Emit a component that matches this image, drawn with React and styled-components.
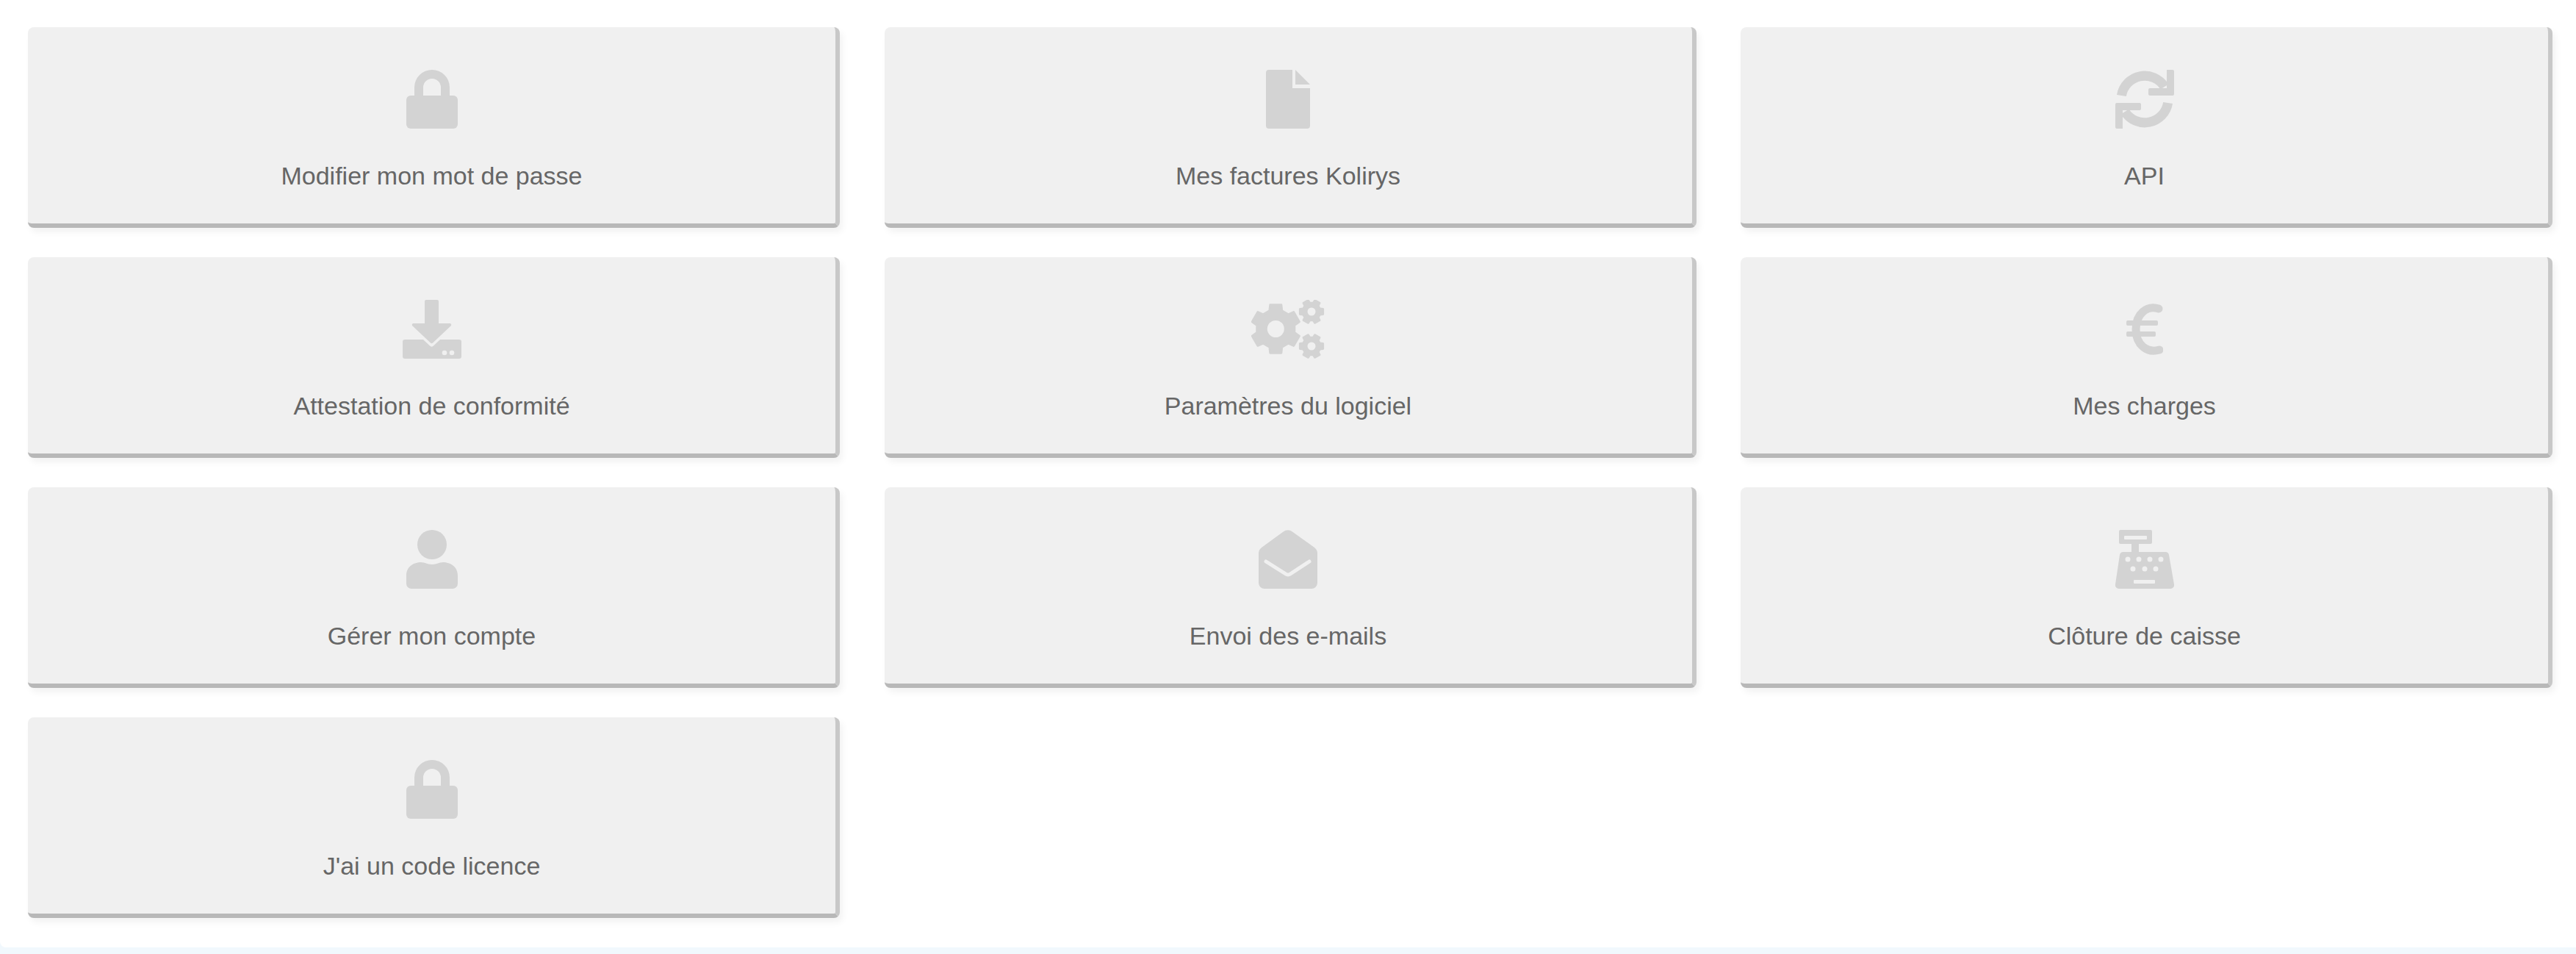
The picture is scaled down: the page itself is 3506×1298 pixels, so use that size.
import React from 'react'
import styled, { createGlobalStyle } from 'styled-components'

const BG = '#f0f0f0'
const ICON = '#d3d3d3'

const GlobalStyle = createGlobalStyle`
  html, body {
    margin: 0;
    padding: 0;
    height: 100%;
    background: #f1f8fd;
    font-family: "Liberation Sans", Arial, sans-serif;
  }
`

// six toothed gear, teeth start at the given angle
const cogPath = (cx, cy, R, root, start) => {
  let d = ''
  for (let i = 0; i < 6; i++) {
    const a = start + i * 60
    const pts = [
      [root, a - 19],
      [R, a - 13],
      [R, a + 13],
      [root, a + 19],
    ]
    pts.forEach(([r, deg], j) => {
      const t = (deg * Math.PI) / 180
      const x = (cx + r * Math.cos(t)).toFixed(2)
      const y = (cy + r * Math.sin(t)).toFixed(2)
      d += `${i === 0 && j === 0 ? 'M' : 'L'}${x} ${y}`
    })
  }
  return d + 'Z'
}

const LockIcon = () => (
  <Svg width="70" height="80" viewBox="0 0 70 80">
    <path d="M11 37V24A24 24 0 0 1 59 24V37H47V24A12 12 0 0 0 23 24V37Z" />
    <rect x="0" y="35" width="70" height="45" rx="6" />
  </Svg>
)

const FileIcon = () => (
  <Svg width="60" height="80" viewBox="0 0 60 80">
    <path d="M4 0H36V25H60V76A4 4 0 0 1 56 80H4A4 4 0 0 1 0 76V4A4 4 0 0 1 4 0Z" />
    <path d="M40 0L60 20H40Z" />
  </Svg>
)

const RefreshIcon = () => {
  const half = (
    <>
      <path d="M8.400 35A32 32 0 0 1 67 23" fill="none" stroke={ICON} strokeWidth="13" />
      <path d="M70 0H78A2 2 0 0 1 80 2V33A2 2 0 0 1 78 35H47A2 2 0 0 1 45 33V27A2 2 0 0 1 47 25H70Z" />
    </>
  )
  return (
    <Svg width="80" height="80" viewBox="0 0 80 80">
      {half}
      <g transform="rotate(180 40 40)">{half}</g>
    </Svg>
  )
}

const DownloadIcon = () => (
  <Svg width="80" height="80" viewBox="0 0 80 80">
    <path d="M32 0H47A2 2 0 0 1 49 2V32H64C66 32 67 34 65.500 35.500L41 58.500C40 59.500 39 59.500 38 58.500L13.500 35.500C12 34 13 32 15 32H30V2A2 2 0 0 1 32 0Z" />
    <path d="M3 54H28L37 62.500C38.500 64 40.500 64 42 62.500L51 54H77A3 3 0 0 1 80 57V77A3 3 0 0 1 77 80H3A3 3 0 0 1 0 77V57A3 3 0 0 1 3 54Z" />
    <circle cx="57" cy="72" r="3.300" fill={BG} />
    <circle cx="67" cy="72" r="3.300" fill={BG} />
  </Svg>
)

const CogsIcon = () => (
  <Svg width="100" height="80" viewBox="0 0 100 80">
    <g stroke={ICON} strokeWidth="3" strokeLinejoin="round">
      <path d={cogPath(33.3, 39.5, 33.5, 26, 30)} />
      <path d={cogPath(82, 16, 16, 12, 0)} />
      <path d={cogPath(82, 63, 16, 12, 0)} />
    </g>
    <circle cx="33.300" cy="39.500" r="11.500" fill={BG} />
    <circle cx="82" cy="16" r="5.500" fill={BG} />
    <circle cx="82" cy="63" r="5.500" fill={BG} />
  </Svg>
)

const EuroIcon = () => (
  <Svg width="50" height="70" viewBox="0 0 50 70">
    <path
      d="M44 7C28 2 13 14 13 35C13 56 28 68 45 63"
      fill="none"
      stroke={ICON}
      strokeWidth="11"
      strokeLinecap="round"
    />
    <rect x="0" y="23" width="43" height="7" rx="2" />
    <rect x="0" y="38" width="40" height="7" rx="2" />
  </Svg>
)

const UserIcon = () => (
  <Svg width="70" height="80" viewBox="0 0 70 80">
    <circle cx="35" cy="20" r="20" />
    <path d="M0 62C0 50 10 44 20 44C26 44 28 47 35 47C42 47 44 44 50 44C60 44 70 50 70 62V73A7 7 0 0 1 63 80H7A7 7 0 0 1 0 73Z" />
  </Svg>
)

const EnvelopeIcon = () => (
  <Svg width="80" height="80" viewBox="0 0 80 80">
    <path d="M33.500 2.500A10 10 0 0 1 46 2.500L76 24Q80 27 80 32V72A8 8 0 0 1 72 80H8A8 8 0 0 1 0 72V32Q0 27 4 24Z" />
    <path
      d="M10 43L37 60Q40 62 43 60L69 43"
      fill="none"
      stroke={BG}
      strokeWidth="5"
      strokeLinecap="round"
    />
  </Svg>
)

const CashIcon = () => (
  <Svg width="80" height="80" viewBox="0 0 80 80">
    <rect x="5" y="0" width="45" height="19" rx="2" />
    <rect x="22" y="19" width="10" height="12" />
    <path d="M11 30H68A5 5 0 0 1 73 34L80 74A5 5 0 0 1 75 80H5A5 5 0 0 1 0 74L6 34A5 5 0 0 1 11 30Z" />
    <g fill={BG}>
      <rect x="12" y="8" width="31" height="5" rx="1" />
      {[17, 32, 47, 62].map((x) => (
        <circle key={x} cx={x} cy="40" r="3.500" />
      ))}
      {[24, 40, 55].map((x) => (
        <circle key={x} cx={x} cy="53" r="3.500" />
      ))}
      <rect x="25" y="68" width="29" height="5" rx="1" />
    </g>
  </Svg>
)

const items = [
  { label: 'Modifier mon mot de passe', icon: LockIcon },
  { label: 'Mes factures Kolirys', icon: FileIcon },
  { label: 'API', icon: RefreshIcon },
  { label: 'Attestation de conformité', icon: DownloadIcon },
  { label: 'Paramètres du logiciel', icon: CogsIcon },
  { label: 'Mes charges', icon: EuroIcon },
  { label: 'Gérer mon compte', icon: UserIcon },
  { label: 'Envoi des e-mails', icon: EnvelopeIcon },
  { label: 'Clôture de caisse', icon: CashIcon },
  { label: "J'ai un code licence", icon: LockIcon },
]

const App = () => (
  <>
    <GlobalStyle />
    <Panel>
      <Grid>
        {items.map(({ label, icon: Icon }) => (
          <Card key={label}>
            <IconBox>
              <Icon />
            </IconBox>
            <Label>{label}</Label>
          </Card>
        ))}
      </Grid>
    </Panel>
  </>
)

const Panel = styled.main`
  box-sizing: border-box;
  height: 1289px;
  padding: 37px 33px 0 38px;
  background: #fff;
  border-radius: 0 0 0 8px;
`

const Grid = styled.div`
  display: grid;
  grid-template-columns: repeat(3, 1105px);
  grid-auto-rows: 273px;
  column-gap: 60.5px;
  row-gap: 40px;
`

const Card = styled.a`
  box-sizing: border-box;
  display: flex;
  flex-direction: column;
  align-items: center;
  padding-top: 58px;
  background: ${BG};
  border-right: 6px solid #c8c8c8;
  border-bottom: 6px solid #b8b8b8;
  border-radius: 8px;
  box-shadow: 4px 6px 10px rgba(0, 0, 0, 0.05);
`

const IconBox = styled.div`
  height: 80px;
  display: flex;
  align-items: center;
  justify-content: center;
`

const Svg = styled.svg`
  display: block;
  fill: ${ICON};
`

const Label = styled.span`
  margin-top: 40px;
  font-size: 34px;
  line-height: 48px;
  color: #666;
`

export default App
